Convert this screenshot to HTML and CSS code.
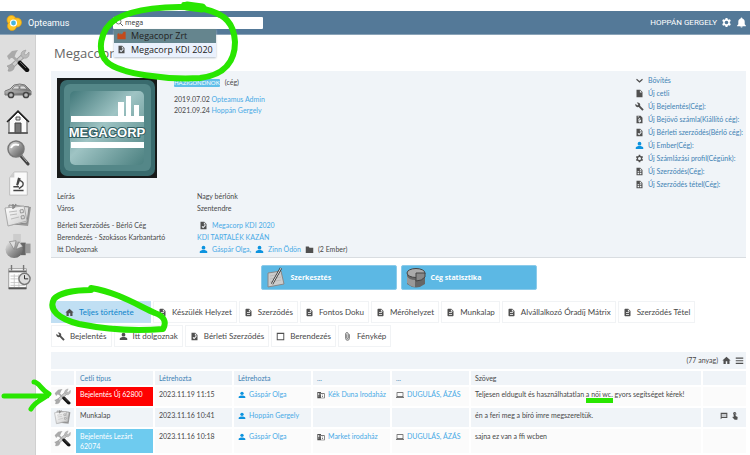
FILE: index.html
```html
<!DOCTYPE html>
<html lang="hu">
<head>
<meta charset="utf-8">
<meta name="viewport" content="width=device-width, initial-scale=1">
<title>Opteamus – Megacopr</title>
<link rel="stylesheet" href="styles.css">
</head>
<body>
<svg class="sprite" aria-hidden="true">
  <defs>
    <linearGradient id="metal" x1="0" y1="0" x2="1" y2="1"><stop offset="0" stop-color="#f2f2f2"/><stop offset=".5" stop-color="#999"/><stop offset="1" stop-color="#555"/></linearGradient>
    <linearGradient id="paper" x1="0" y1="0" x2="1" y2="1"><stop offset="0" stop-color="#fff"/><stop offset="1" stop-color="#ccc"/></linearGradient>
    <symbol id="doc" viewBox="0 0 24 24"><path fill-rule="evenodd" d="M6 2h8l6 6v12a2 2 0 0 1-2 2H6a2 2 0 0 1-2-2V4a2 2 0 0 1 2-2zm2 9v2h8v-2zm0 5v2h8v-2zM13 3.500V9h5.500z"/></symbol>
    <symbol id="file" viewBox="0 0 24 24"><path fill-rule="evenodd" d="M4 2h10l6 6v14H4zM13 3.500V9h5.500z"/></symbol>
    <symbol id="doccheck" viewBox="0 0 24 24"><path fill-rule="evenodd" d="M4 2h10l6 6v14H4zM13 3.500V9h5.500zM7 15l4 4 7-7-2-2-5 5-2-2z"/></symbol>
    <symbol id="docmoney" viewBox="0 0 24 24"><path fill-rule="evenodd" d="M4 2h11l5 5v15H4zM7 4v2h4V4zM15 10h-2V8h-2v2H9v5h5v1H9v2h2v2h2v-2h3v-5h-5v-1h4z"/></symbol>
    <symbol id="docgrid" viewBox="0 0 24 24"><path fill-rule="evenodd" d="M4 2h10l6 6v14H4zM13 3.500V9h5.500zM7 11v3h4v-3zm6 0v3h4v-3zm-6 5v3h4v-3zm6 0v3h4v-3z"/></symbol>
    <symbol id="wrench" viewBox="0 0 24 24"><path d="M22.700 19l-9.100-9.100c.9-2.300.4-5-1.500-6.900-2-2-5-2.400-7.400-1.300L9 6 6 9 1.600 4.700C.4 7.100.9 10.100 2.900 12.100c1.900 1.900 4.600 2.400 6.900 1.500l9.100 9.100c.4.400 1 .4 1.400 0l2.300-2.300c.5-.4.5-1.100.1-1.400z"/></symbol>
    <symbol id="person" viewBox="0 0 24 24"><circle cx="12" cy="7" r="5"/><path d="M2 21v-3c0-3 6-4.500 10-4.500s10 1.500 10 4.500v3z"/></symbol>
    <symbol id="gear" viewBox="0 0 24 24"><path fill-rule="evenodd" d="M10 2h4l.6 3 2 1.100 2.900-1 2 3.500-2.300 2v2.800l2.300 2-2 3.500-2.900-1-2 1.100-.6 3h-4l-.6-3-2-1.100-2.900 1-2-3.500 2.300-2v-2.800l-2.300-2 2-3.500 2.900 1 2-1.100zM12 8a4 4 0 1 0 0 8 4 4 0 0 0 0-8z"/></symbol>
    <symbol id="bell" viewBox="0 0 24 24"><path d="M12 23a2.500 2.500 0 0 0 2.500-2.500h-5A2.500 2.500 0 0 0 12 23zm7-7v-5.500c0-3.500-2-6.200-5.200-7V2.700a1.800 1.800 0 0 0-3.600 0v.8C7 4.300 5 7 5 10.500V16l-2.500 2.500V20h19v-1.500z"/></symbol>
    <symbol id="home" viewBox="0 0 24 24"><path d="M10 21v-7h4v7h6v-9h3L12 2 1 12h3v9z"/></symbol>
    <symbol id="folder" viewBox="0 0 24 24"><path d="M2 4h8l2 3h10v14H2z"/></symbol>
    <symbol id="chevron" viewBox="0 0 24 24"><path d="M5 7l7 6 7-6 2 3-9 8-9-8z"/></symbol>
    <symbol id="box" viewBox="0 0 24 24"><path fill-rule="evenodd" d="M2 2h20v20H2zM4.500 5v14.500h15V5z"/></symbol>
    <symbol id="clip" viewBox="0 0 24 24"><path d="M17 6v11a5 5 0 0 1-10 0V5a3.500 3.500 0 0 1 7 0v11a2 2 0 0 1-4 0V6" fill="none" stroke="currentColor" stroke-width="2"/></symbol>
    <symbol id="building" viewBox="0 0 24 24"><path fill-rule="evenodd" d="M1 3h11v4h11v15H1zM3 6v2h3V6zm5 0v2h2V6zM3 10v2h3v-2zm5 0v2h2v-2zM3 14v2h3v-2zm5 0v2h2v-2zm4-5v11h9V9zM15 11h3v2h-3zm0 4h3v2h-3z"/></symbol>
    <symbol id="laptop" viewBox="0 0 24 24"><path fill-rule="evenodd" d="M2 4h20v14h2v2H0v-2h2zM4 6v10h16V6z"/></symbol>
    <symbol id="menu" viewBox="0 0 24 24"><path d="M2 4h20v3H2zm0 7h20v3H2zm0 7h20v3H2z"/></symbol>
    <symbol id="chat" viewBox="0 0 24 24"><path fill-rule="evenodd" d="M2 2h20v16H6l-4 4zM5 6v2h14V6zm0 3v2h14V9zm0 3v2h14v-2z"/></symbol>
    <symbol id="touch" viewBox="0 0 24 24"><path d="M8 11V6a3 3 0 0 1 6 0v6l6 3-1 8h-8l-7-7 1-2 3 1zM6 9a5 5 0 1 1 10 0V5a5 5 0 0 0-10 0z"/></symbol>
    <symbol id="factory" viewBox="0 0 24 24"><path d="M1 22V8l5-3v5l4-4v4l5-5v5l2-8h6v20z"/></symbol>
    <symbol id="search" viewBox="0 0 24 24"><circle cx="9.500" cy="9.500" r="6.500" fill="none" stroke="currentColor" stroke-width="2"/><path d="M14 14l7 7" stroke="currentColor" stroke-width="2.500"/></symbol>
    <symbol id="tools" viewBox="0 0 24 24">
      <path d="M4 20L17 8" stroke="#999" stroke-width="4.500"/><path d="M4 20L17 8" stroke="#ccc" stroke-width="3"/>
      <path d="M16 9a4 4 0 0 1 1-6l3-1-2 4 2 1 3-3c1 5-3 8-7 5z" fill="#bbb" stroke="#999" stroke-width=".6"/>
      <path d="M6 16l-5 2 2 2-1 3c4 1 7-2 6-5z" fill="#aaa" stroke="#999" stroke-width=".6"/>
      <path d="M6 8l9 8" stroke="#aaa" stroke-width="2.500"/><path d="M1 8l5-5 6-1-2 3-2 5-3 0-2 2z" fill="#aaa"/>
      <path d="M14 15l7 7" stroke="#111" stroke-width="4.500" stroke-linecap="round"/><path d="M14 14l6 6" stroke="#666"/>
    </symbol>
    <symbol id="notes" viewBox="0 0 28 26">
      <path d="M7 3l20 2-3 19-19-2z" fill="#999"/><path d="M5 3l20 2-2 16-18 2z" fill="#ddd" stroke="#888"/>
      <path d="M1 6l19-2 3 15-19 5z" fill="url(#paper)" stroke="#aaa"/><path d="M5 10l8-1M6 13l7-1M7 17l8-2" stroke="#bbb"/><path d="M16 8l3-.5.5 3-3 .5zM17 14l3-.5.5 3-3 .5z" fill="none" stroke="#999"/><path d="M9 2v5M12 2l-2 4" stroke="#888" stroke-width="1.500"/>
    </symbol>
  </defs>
</svg>

<header class="topbar">
  <a class="brand" href="#">
    <svg class="brand-mark" viewBox="0 0 16 16" aria-hidden="true"><g fill="#ffc525" stroke="#e8a00c" stroke-width=".7"><circle cx="5.500" cy="5" r="4.500"/><circle cx="11" cy="7.500" r="4.500"/><circle cx="6" cy="11" r="4.500"/></g><circle cx="7.500" cy="8" r="3.600" fill="#fff"/><circle cx="7.500" cy="8" r="2.400" fill="#47b5df"/></svg>
    <span>Opteamus</span>
  </a>
  <div class="search">
    <label class="search-box"><svg class="icon"><use href="#search"/></svg><input type="text" value="mega" aria-label="Keresés"></label>
    <ul class="suggestions">
      <li class="active"><svg class="icon rust"><use href="#factory"/></svg><a href="#">Megacopr Zrt</a></li>
      <li><svg class="icon"><use href="#doccheck"/></svg><a href="#">Megacorp KDI 2020</a></li>
    </ul>
  </div>
  <div class="account">
    <span>HOPPÁN GERGELY</span>
    <button type="button" aria-label="Beállítások"><svg><use href="#gear"/></svg></button>
    <button type="button" aria-label="Értesítések"><svg><use href="#bell"/></svg></button>
  </div>
</header>

<div class="layout">
  <nav class="sidebar">
    <a href="#" aria-label="Szerviz"><svg viewBox="0 0 24 24"><use href="#tools"/></svg></a>
    <a href="#" aria-label="Autók"><svg class="wide" viewBox="0 0 28 16"><path d="M1 12V8l5-2 4-4q6-2 11 0l4 4 2 2v4z" fill="url(#metal)" stroke="#777"/><path d="M8 6l3-3h4v3zM16 3h4l3 3h-7z" fill="#ddd" stroke="#666" stroke-width=".6"/><path d="M1 9h26" stroke="#aaa"/><g fill="#bbb" stroke="#444" stroke-width="1.500"><circle cx="7" cy="12" r="2.600"/><circle cx="22" cy="12" r="2.600"/></g></svg></a>
    <a href="#" aria-label="Házak"><svg viewBox="0 0 24 26"><path d="M3 12v12h18V12l-9-9z" fill="#fafafa" stroke="#444"/><path d="M1 13L12 2l11 11" fill="none" stroke="#222" stroke-width="1.500"/><path d="M9 14h6v10H9z" fill="#777" stroke="#444"/><path d="M10 8v3h4V8z" fill="#ddd" stroke="#555"/><path d="M2 24h20" stroke="#555" stroke-width="1.500"/></svg></a>
    <a href="#" aria-label="Keresés"><svg viewBox="0 0 24 26"><path d="M15 16l7 8" stroke="#444" stroke-width="3" stroke-linecap="round"/><path d="M15 15l6 7" stroke="#aaa"/><circle cx="10" cy="9" r="8" fill="url(#metal)" stroke="#777" stroke-width="1.500"/><path d="M5 8q2-5 8-3" fill="none" stroke="#fff" stroke-width="2"/></svg></a>
    <a href="#" aria-label="Vizsgálatok"><svg viewBox="0 0 24 28"><path d="M8 1h14v25H3V7z" fill="#fafafa" stroke="#bbb"/><path d="M8 1v6H3z" fill="#ccc"/><path d="M12 7l3 1-3 8-2-1z" fill="#444"/><path d="M14 10q5 2 3 6l-4 3M7 21h11M7 17h6" fill="none" stroke="#444" stroke-width="1.500"/></svg></a>
    <a href="#" aria-label="Cetlik"><svg class="wide" viewBox="0 0 28 26"><use href="#notes"/></svg></a>
    <a href="#" aria-label="Statisztika"><svg class="wide" viewBox="0 0 28 27"><path d="M9 1h8v22H9z" fill="#ccc"/><path d="M17 10h5v13h-5z" fill="#666"/><path d="M22 11h5v10h-5z" fill="#999"/><circle cx="10" cy="17" r="9" fill="url(#metal)"/><path d="M10 17L5 9l7-1zM12 17l3-8 4 5z" fill="#ddd" stroke="#777" stroke-width=".6"/></svg></a>
    <a href="#" aria-label="Naptár"><svg class="wide" viewBox="0 0 28 28"><path d="M4 5h19v22H4z" fill="#fdfdfd" stroke="#999"/><path d="M4 7h19v2H4z" fill="#666"/><path d="M7 1v6M20 1v6" stroke="#777" stroke-width="1.500"/><path d="M6 13h15M6 16h15M6 20h15M6 23h15M10 11v14M15 11v14" stroke="#bbb" stroke-width=".8"/><path d="M4 26h19" stroke="#555" stroke-width="2"/><circle cx="21" cy="16" r="6" fill="#ddd" stroke="#777" stroke-width="1.500"/><path d="M21 12v4h4" fill="none" stroke="#222"/></svg></a>
  </nav>

  <main>
    <h1>Megacopr</h1>

    <section class="panel">
      <div class="overview">
        <svg class="logo" viewBox="0 0 100 100" role="img" aria-label="Megacorp">
          <defs><linearGradient id="teal" x1="0" y1="0" x2="1" y2="1"><stop offset="0" stop-color="#41787a"/><stop offset=".45" stop-color="#9fc4c4"/><stop offset="1" stop-color="#4b8080"/></linearGradient></defs>
          <path fill="#171a1a" d="M0 0h100v100H0z"/>
          <rect x="3" y="2" width="95" height="96" rx="7" fill="#396a6d"/>
          <rect x="7" y="6" width="87" height="87" rx="6" fill="#548788"/>
          <rect x="13" y="13" width="74" height="74" rx="5" fill="url(#teal)"/>
          <path fill="#fff" d="M14 38h73v6H14zM61 24h6v15h-6zM69 18h5v21h-5zM77 27h5v12h-5zM14 64h73v6H14z"/>
          <text class="logo-text" x="50" y="59" text-anchor="middle">MEGACORP</text>
        </svg>
        <div class="meta">
          <p><span class="badge">HÁZIGONDNOKI</span> (cég)</p>
          <p>2019.07.02 <a href="#">Opteamus Admin</a></p>
          <p>2021.09.24 <a href="#">Hoppán Gergely</a></p>
        </div>
        <ul class="actions">
          <li><svg class="icon"><use href="#chevron"/></svg><a href="#">Bővítés</a></li>
          <li><svg class="icon"><use href="#file"/></svg><a href="#">Új cetli</a></li>
          <li><svg class="icon"><use href="#wrench"/></svg><a href="#">Új Bejelentés(Cég):</a></li>
          <li><svg class="icon"><use href="#docmoney"/></svg><a href="#">Új Bejövő számla(Kiállító cég):</a></li>
          <li><svg class="icon"><use href="#doccheck"/></svg><a href="#">Új Bérleti szerződés(Bérlő cég):</a></li>
          <li><svg class="icon blue"><use href="#person"/></svg><a href="#">Új Ember(Cég):</a></li>
          <li><svg class="icon"><use href="#gear"/></svg><a href="#">Új Számlázási profil(Cégünk):</a></li>
          <li><svg class="icon"><use href="#docgrid"/></svg><a href="#">Új Szerződés(Cég):</a></li>
          <li><svg class="icon"><use href="#docgrid"/></svg><a href="#">Új Szerződés tétel(Cég):</a></li>
        </ul>
      </div>
      <dl class="details">
        <dt>Leírás</dt><dd>Nagy bérlőnk</dd>
        <dt>Város</dt><dd>Szentendre</dd>
        <dt class="spaced">Bérleti Szerződés - Bérlő Cég</dt><dd class="spaced with-icon"><svg class="icon"><use href="#doccheck"/></svg><a href="#">Megacorp KDI 2020</a></dd>
        <dt>Berendezés - Szokásos Karbantartó</dt><dd><a href="#">KDI TARTALÉK KAZÁN</a></dd>
        <dt>Itt Dolgoznak</dt><dd class="with-icon"><svg class="icon blue"><use href="#person"/></svg><a href="#">Gáspár Olga,</a><svg class="icon blue"><use href="#person"/></svg><a href="#">Zinn Ödön</a><svg class="icon"><use href="#folder"/></svg><span>(2 Ember)</span></dd>
      </dl>
    </section>

    <div class="buttons">
      <button type="button"><svg viewBox="0 0 20 22" aria-hidden="true"><path d="M2 6l13-2 3 13-16 3z" fill="#ccc" stroke="#888"/><path d="M4 9l10-2M4 12l11-2M4 15l11-2" stroke="#bbb"/><path d="M15 1L6 17" stroke="#333" stroke-width="2.500"/><path d="M15 1L6 17" stroke="#ddd"/></svg>Szerkesztés</button>
      <button type="button"><svg viewBox="0 0 20 22" aria-hidden="true"><path d="M1 6v11q9 7 18 0V6z" fill="#666"/><ellipse cx="10" cy="6" rx="9" ry="4.500" fill="#aaa" stroke="#444"/><path d="M10 6v8q6 0 9-4V6z" fill="#888" stroke="#444"/><path d="M1 9v7q4 4 8 4v-7q-6 0-8-4z" fill="#999"/></svg>Cég statisztika</button>
    </div>

    <nav class="tabs">
      <a class="current" href="#"><svg class="icon"><use href="#home"/></svg>Teljes története</a>
      <a href="#"><svg class="icon"><use href="#doc"/></svg>Készülék Helyzet</a>
      <a href="#"><svg class="icon"><use href="#doc"/></svg>Szerződés</a>
      <a href="#"><svg class="icon"><use href="#doc"/></svg>Fontos Doku</a>
      <a href="#"><svg class="icon"><use href="#doc"/></svg>Mérőhelyzet</a>
      <a href="#"><svg class="icon"><use href="#doc"/></svg>Munkalap</a>
      <a href="#"><svg class="icon"><use href="#doc"/></svg>Alvállalkozó Óradíj Mátrix</a>
      <a href="#"><svg class="icon"><use href="#doc"/></svg>Szerződés Tétel</a>
      <a href="#"><svg class="icon"><use href="#wrench"/></svg>Bejelentés</a>
      <a href="#"><svg class="icon"><use href="#person"/></svg>Itt dolgoznak</a>
      <a href="#"><svg class="icon"><use href="#doccheck"/></svg>Bérleti Szerződés</a>
      <a href="#"><svg class="icon"><use href="#box"/></svg>Berendezés</a>
      <a href="#"><svg class="icon"><use href="#clip"/></svg>Fénykép</a>
    </nav>

    <div class="list-bar"><span>(77 anyag)</span><svg class="icon"><use href="#home"/></svg><svg class="icon"><use href="#menu"/></svg></div>

    <table>
      <colgroup><col class="c-icon"><col class="c-data"><col class="c-data"><col class="c-data"><col class="c-data"><col class="c-data"><col><col class="c-tools"></colgroup>
      <thead>
        <tr><th></th><th>Cetli típus</th><th>Létrehozta</th><th>Létrehozta</th><th>...</th><th>...</th><th class="plain">Szöveg</th><th></th></tr>
      </thead>
      <tbody>
        <tr>
          <td class="kind"><svg viewBox="0 0 24 24"><use href="#tools"/></svg></td>
          <td class="new">Bejelentés Új 62800</td><td>2023.11.19 11:15</td>
          <td><svg class="icon blue"><use href="#person"/></svg><a href="#">Gáspár Olga</a></td>
          <td><svg class="icon"><use href="#building"/></svg><a href="#">Kék Duna Irodaház</a></td>
          <td><svg class="icon"><use href="#laptop"/></svg><a href="#">DUGULÁS, ÁZÁS</a></td>
          <td>Teljesen eldugult és használhatatlan <span class="marked">a női wc.</span> gyors segítséget kérek!</td><td></td>
        </tr>
        <tr>
          <td class="kind"><svg viewBox="0 0 28 26"><use href="#notes"/></svg></td>
          <td>Munkalap</td><td>2023.11.16 10:41</td>
          <td><svg class="icon blue"><use href="#person"/></svg><a href="#">Hoppán Gergely</a></td>
          <td></td><td></td>
          <td>én a feri meg a bíró imre megszereltük.</td>
          <td class="tools"><svg class="icon"><use href="#chat"/></svg><svg class="icon"><use href="#touch"/></svg></td>
        </tr>
        <tr class="tall">
          <td class="kind"><svg viewBox="0 0 24 24"><use href="#tools"/></svg></td>
          <td class="closed">Bejelentés Lezárt<br>62074</td><td>2023.11.16 10:18</td>
          <td><svg class="icon blue"><use href="#person"/></svg><a href="#">Gáspár Olga</a></td>
          <td><svg class="icon"><use href="#building"/></svg><a href="#">Market irodaház</a></td>
          <td><svg class="icon"><use href="#laptop"/></svg><a href="#">DUGULÁS, ÁZÁS</a></td>
          <td>sajna ez van a ffi wcben</td><td></td>
        </tr>
        <tr class="peek"><td></td><td></td><td></td><td></td><td></td><td></td><td></td><td></td></tr>
      </tbody>
    </table>
  </main>
</div>

<svg class="ink ink-search" viewBox="0 0 144 88" aria-hidden="true"><path d="M106 8C70 5 38 9 20 19C3 30 1 52 11 62C24 74 70 80 104 78C130 75 139 60 139 42C138 24 130 14 108 9L88 5"/><path class="heavy" d="M91 6L106 8"/></svg>
<svg class="ink ink-tab" viewBox="0 0 120 52" aria-hidden="true"><path d="M42 8C25 8 10 11 5 17C-1 28 10 37 30 42C60 48 90 49 114 47C118 40 115 34 106 31C90 24 68 10 42 6"/></svg>
<svg class="ink ink-arrow" viewBox="0 0 52 36" aria-hidden="true"><path d="M3 18H46M33 4C38 4 40 12 48 16C43 22 36 21 30 31"/></svg>
</body>
</html>
```
FILE: styles.css
```css
* { box-sizing: border-box; }
body {
  margin: 0;
  padding-top: 11px;
  min-height: 100vh;
  display: flex;
  flex-direction: column;
  position: relative;
  background: #fff;
  color: #484848;
  font-family: Lato, "Open Sans", sans-serif;
  font-size: 7px;
  line-height: 11px;
}
a { color: #48aae6; text-decoration: none; }
ul, dl, dd, p, h1 { margin: 0; padding: 0; list-style: none; }
button, input { font: inherit; color: inherit; border: 0; padding: 0; background: none; }
.sprite { position: absolute; width: 0; height: 0; }
.icon { width: 9px; height: 9px; flex: none; fill: currentColor; color: #505050; }
.icon.blue { color: #0c93df; }
.icon.rust { color: #c44b1c; }

.topbar {
  flex: none;
  display: flex;
  align-items: center;
  height: 24px;
  padding: 0 3px 0 6px;
  background: #547998;
  border-bottom: 1px solid #8aa3b8;
  color: #fff;
}
.brand { display: flex; align-items: center; gap: 6px; width: 107px; color: #fff; font: 9px/12px Roboto, sans-serif; }
.brand-mark { width: 16px; height: 16px; }
.search { position: relative; width: 150px; }
.search-box { display: flex; align-items: center; gap: 1px; height: 12px; padding: 0 2px; border-radius: 1px; background: #fff; }
.search-box input { flex: 1; min-width: 0; color: #333; outline: 0; font-family: "Open Sans", sans-serif; }
.suggestions { position: absolute; z-index: 2; top: 12px; left: 1px; width: 102px; background: #eaf1fd; box-shadow: 0 1px 2px #b5bdc8; font: 9px/14px "Open Sans", sans-serif; white-space: nowrap; }
.suggestions li { display: flex; align-items: center; gap: 5px; padding-left: 3px; }
.suggestions .active { background: #65858e; }
.suggestions a { color: #222; }
.account { display: flex; align-items: center; gap: 4px; margin-left: auto; font: 8px/12px Roboto, sans-serif; }
.account button, .account svg { display: block; width: 11px; height: 11px; fill: #fff; }

.layout { flex: 1; display: flex; }
.sidebar { flex: none; width: 36px; padding-top: 10px; display: flex; flex-direction: column; gap: 1px; background: #dedede; border-right: 1px solid #d0d0d0; }
.sidebar a { display: flex; justify-content: center; align-items: center; height: 30px; }
.sidebar svg { width: 24px; height: 26px; }
.sidebar svg.wide { width: 28px; }
main { flex: 1; min-width: 0; padding: 8px 4px 0 15px; }
h1 { padding-left: 3px; margin-bottom: 8px; font: 13px/20px "Open Sans", sans-serif; color: #666; }

.panel { background: #f0f4f8; border-bottom: 1px solid #d9dde1; padding: 3px 6px 2px; }
.overview { display: flex; min-height: 117px; }
.logo { width: 100px; height: 100px; margin: 4px 17px 0 0; flex: none; }
.logo-text { font: bold 13px "Liberation Sans", sans-serif; fill: #fff; stroke: #315e61; stroke-width: 2px; paint-order: stroke; }
.meta { flex: 1; padding-top: 3px; }
.meta p:first-child { margin-bottom: 6px; }
.badge { display: inline-block; width: 46px; margin-right: 3px; overflow: hidden; vertical-align: middle; border-radius: 1px; background: #60bfe9; color: #fff; font-size: 6px; line-height: 8px; text-align: center; }
.actions { width: 105px; line-height: 13px; white-space: nowrap; }
.actions li { display: flex; align-items: center; gap: 4px; }
.actions a { color: #3e82b4; }
.details { display: grid; grid-template-columns: 140px 1fr; row-gap: 1px; }
.details .spaced { margin-top: 5px; }
.with-icon { display: flex; align-items: center; gap: 4px; padding-left: 2px; }

.buttons { display: flex; justify-content: center; gap: 4px; margin: 7px 0 11px; }
.buttons button { display: flex; align-items: center; gap: 5px; width: 136px; height: 25px; padding-left: 4px; border: 1px solid #8ccbea; border-radius: 2px; background: #5cb8e4; color: #fff; font: bold 7px/11px "Open Sans", sans-serif; }
.buttons svg { width: 20px; height: 22px; }

.tabs { display: flex; flex-wrap: wrap; gap: 2px; margin-bottom: 5px; font-size: 8px; }
.tabs a { display: flex; align-items: center; gap: 5px; height: 22px; padding: 0 4px; border: 1px solid #f1f3f5; color: #484848; }
.tabs .current { width: 100px; padding-left: 13px; background: #c0dff3; border-color: #c0dff3; color: #0d84cb; }

.list-bar { display: flex; justify-content: flex-end; align-items: center; gap: 4px; height: 17px; padding-right: 2px; margin-bottom: 2px; background: #f0f4f8; }
table { width: 100%; table-layout: fixed; border-collapse: collapse; line-height: 10px; white-space: nowrap; }
.c-icon { width: 24px; }
.c-data { width: 79px; }
.c-tools { width: 44px; }
th, td { padding: 2px 4px; border-left: 2px solid #fff; border-bottom: 2px solid #fff; text-align: left; vertical-align: top; font-weight: 400; }
th:first-child, td:first-child { border-left: 0; }
th { height: 15px; background: #f0f4f8; color: #3e82b4; }
th.plain { color: #484848; }
td { height: 21px; background: #fbfbfb; }
tbody tr:nth-child(even) td { background: #f0f4f8; }
td .icon { width: 8px; height: 8px; margin-right: 3px; vertical-align: middle; }
td.kind { padding: 0 3px; }
.kind svg { display: block; width: 17px; height: 18px; }
tbody tr .new { background: #f00; color: #fff; }
tbody tr .closed { background: #6ecbef; color: #fff; }
.tall td { height: 25px; }
.peek td { height: 2px; padding: 0; border-bottom: 0; }
.tools { text-align: right; }
.marked { box-shadow: 0 5px #29e600; }

.ink { position: absolute; z-index: 3; pointer-events: none; fill: none; stroke: #29e600; stroke-width: 6px; stroke-linecap: round; stroke-linejoin: round; }
.ink .heavy { stroke-width: 9px; }
.ink-search { left: 96px; top: 0; width: 144px; height: 88px; }
.ink-tab { left: 49px; top: 282px; width: 120px; height: 52px; }
.ink-arrow { left: 1px; top: 378px; width: 52px; height: 36px; stroke-width: 5px; }
```
